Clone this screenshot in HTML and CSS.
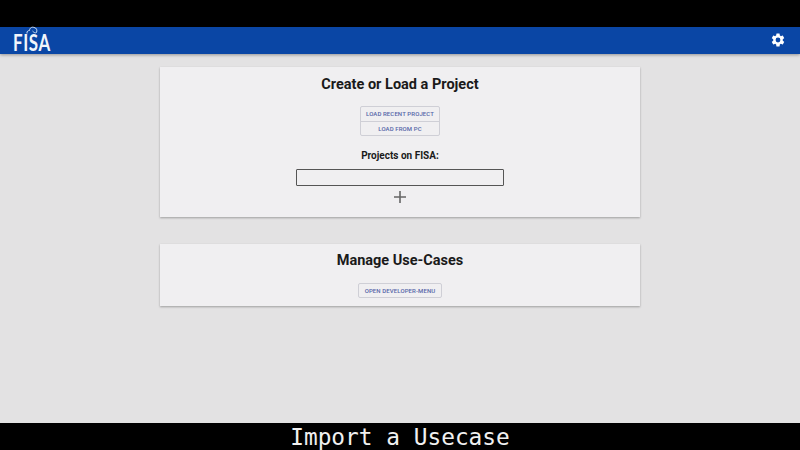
FILE: index.html
```html
<!DOCTYPE html>
<html lang="en">
<head>
    <meta charset="UTF-8">
    <title>FISA</title>
    <link rel="stylesheet" href="styles.css">
</head>
<body>
    <div class="letterbox-top"></div>
    <header class="toolbar">
        <div class="logo">
            <svg class="logo-cloud" width="12" height="9" viewBox="0 0 12 9">
                <path d="M1 7.5 C0.5 5 2.5 4.5 3.5 4.5 C3.5 2 6 0.5 8 1.5 C10.5 1.5 11.5 4.5 10.5 6.5 C9 7.5 7.5 6 6.5 5" fill="none" stroke="#cfe0f5" stroke-width="1"/>
            </svg>
            <span class="logo-text">FISA</span>
        </div>
        <svg class="settings" width="16" height="16" viewBox="0 0 24 24">
            <path fill="#fff" d="M19.14 12.94c.04-.3.06-.61.06-.94s-.02-.64-.07-.94l2.03-1.58a.49.49 0 0 0 .12-.61l-1.92-3.32a.49.49 0 0 0-.59-.22l-2.39.96a7 7 0 0 0-1.62-.94l-.36-2.54a.48.48 0 0 0-.48-.41h-3.84a.47.47 0 0 0-.47.41l-.36 2.54c-.59.24-1.13.57-1.62.94l-2.39-.96a.48.48 0 0 0-.59.22L2.74 8.87a.47.47 0 0 0 .12.61l2.03 1.58c-.05.3-.09.63-.09.94s.02.64.07.94l-2.03 1.58a.49.49 0 0 0-.12.61l1.92 3.32c.12.22.37.29.59.22l2.39-.96c.5.38 1.03.7 1.62.94l.36 2.54c.05.24.24.41.48.41h3.84c.24 0 .44-.17.47-.41l.36-2.54c.59-.24 1.13-.56 1.62-.94l2.39.96c.22.08.47 0 .59-.22l1.92-3.32a.47.47 0 0 0-.12-.61l-2.01-1.58zM12 15.6A3.6 3.6 0 1 1 12 8.4a3.6 3.6 0 0 1 0 7.2z"/>
        </svg>
    </header>

    <main class="content">
        <section class="card project-card">
            <h1>Create or Load a Project</h1>
            <div class="btn-group">
                <button class="btn">Load recent project</button>
                <button class="btn">Load from PC</button>
            </div>
            <h2>Projects on FISA:</h2>
            <div class="project-select"></div>
            <svg class="add-icon" width="14" height="14" viewBox="0 0 14 14">
                <path d="M7 1V13M1 7H13" stroke="#666" stroke-width="1.6" fill="none"/>
            </svg>
        </section>

        <section class="card usecase-card">
            <h1>Manage Use-Cases</h1>
            <button class="btn btn-single">Open developer-menu</button>
        </section>
    </main>

    <footer class="caption">Import a Usecase</footer>
</body>
</html>
```

FILE: styles.css
```css
* {
    box-sizing: border-box;
}

html, body {
    height: 100%;
}

body {
    margin: 0;
    display: flex;
    flex-direction: column;
    background-color: #e3e2e3;
    font-family: 'Roboto', Arial, sans-serif;
    overflow: hidden;
}

.letterbox-top {
    height: 27px;
    background-color: #000;
}

.toolbar {
    height: 27px;
    padding: 0 14px 2px 13px;
    display: flex;
    justify-content: space-between;
    align-items: center;
    background-color: #0a46a5;
    box-shadow: 0 1px 3px rgba(0, 0, 0, 0.35);
}

.logo {
    position: relative;
    display: flex;
    align-items: center;
}

.logo-cloud {
    position: absolute;
    top: -1px;
    left: 13px;
}

.logo-text {
    color: #f2f5fb;
    font-family: 'Lato', Arial, sans-serif;
    font-size: 22px;
    font-weight: 700;
    letter-spacing: 0.8px;
    line-height: 20px;
    margin-top: 6px;
    transform: scaleX(0.77);
    transform-origin: left center;
}

.content {
    flex: 1;
    padding-top: 13px;
    display: flex;
    flex-direction: column;
    align-items: center;
    gap: 27px;
}

.card {
    width: 480px;
    display: flex;
    flex-direction: column;
    align-items: center;
    background-color: #f0eff1;
    box-shadow: 0 1px 2px rgba(0, 0, 0, 0.3);
    color: #1a1a1a;
}

.project-card {
    height: 150px;
    padding-top: 9px;
}

.usecase-card {
    height: 62px;
    padding-top: 8px;
}

h1 {
    margin: 0;
    font-size: 14.5px;
    font-weight: 700;
    line-height: 18px;
}

.usecase-card h1 {
    margin-bottom: 13px;
}

h2 {
    margin: 13px 0 7px;
    font-size: 10px;
    font-weight: 700;
    line-height: 13px;
}

.btn-group {
    margin-top: 12px;
    width: 80px;
    display: flex;
    flex-direction: column;
    border: 1px solid #cfcfd6;
    border-radius: 2px;
}

.btn {
    height: 14px;
    padding: 0 0 1px;
    background: none;
    border: none;
    color: #5565a8;
    font-family: 'Roboto', Arial, sans-serif;
    font-size: 6px;
    font-weight: 500;
    letter-spacing: 0.1px;
    text-transform: uppercase;
}

.btn-group .btn + .btn {
    border-top: 1px solid #cfcfd6;
}

.btn-single {
    width: 84px;
    height: 15px;
    border: 1px solid #cfcfd6;
    border-radius: 2px;
}

.project-select {
    width: 208px;
    height: 17px;
    border: 1px solid #555;
    border-radius: 1px;
}

.add-icon {
    margin-top: 4px;
}

.caption {
    height: 27px;
    background-color: #000;
    color: #f0f0f0;
    font-family: 'DejaVu Sans Mono', monospace;
    font-size: 22.8px;
    line-height: 29px;
    text-align: center;
}
```
